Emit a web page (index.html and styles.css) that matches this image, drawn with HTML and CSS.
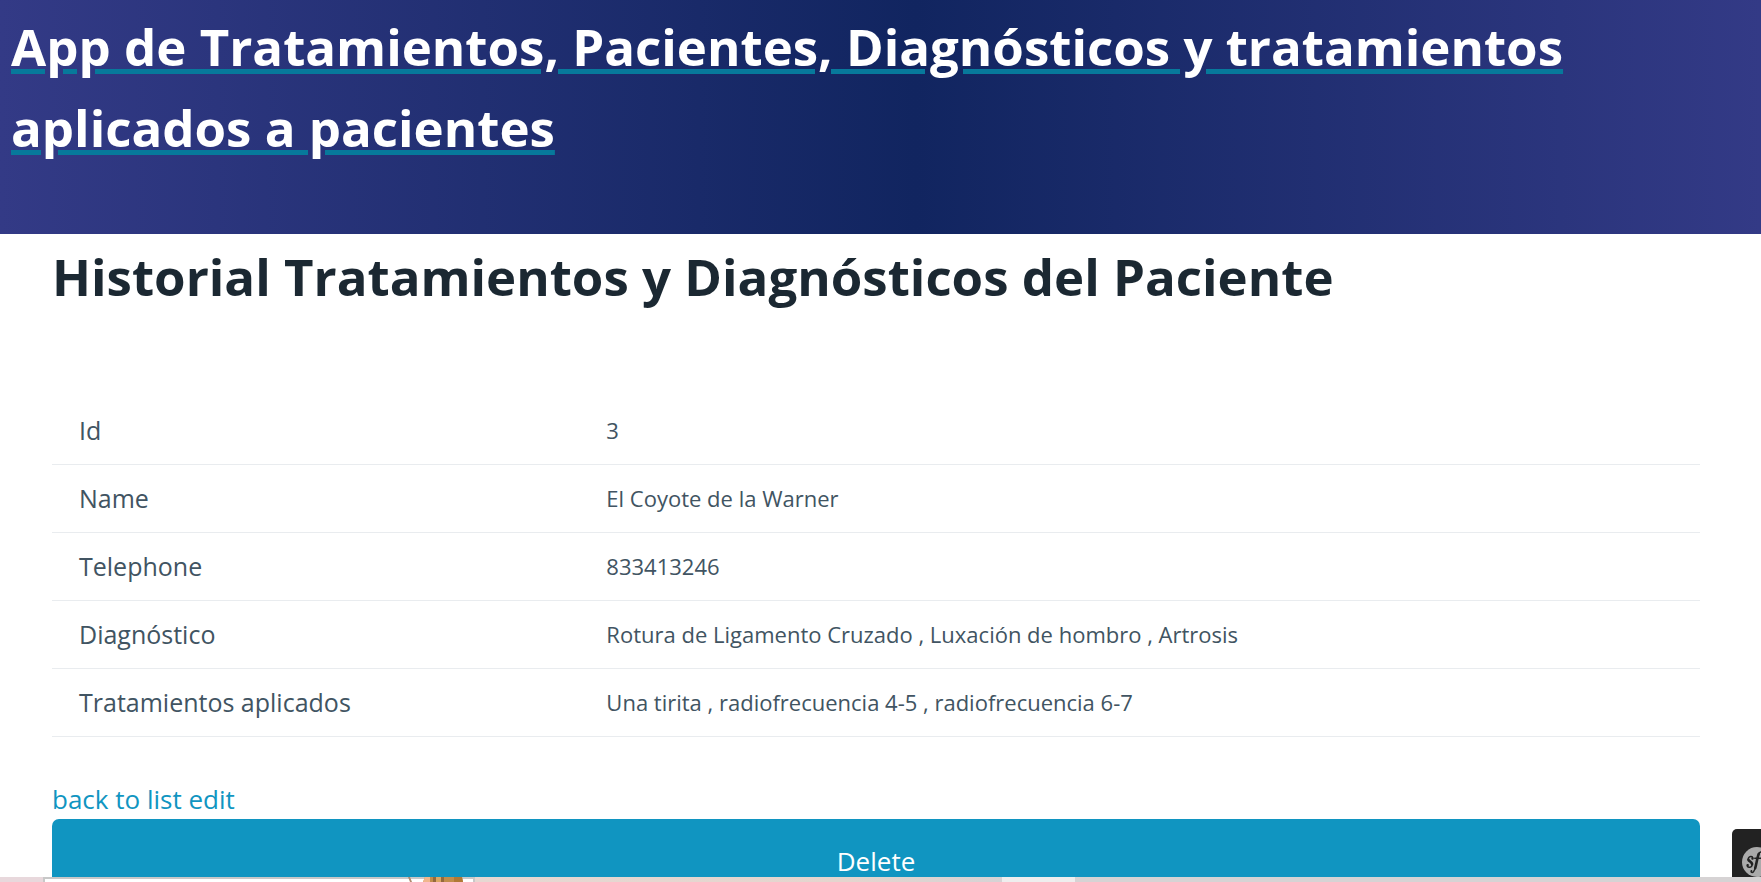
FILE: index.html
```html
<!DOCTYPE html>
<html lang="es">
<head>
<meta charset="utf-8">
<meta name="viewport" content="width=device-width, initial-scale=1">
<title>Historial del Paciente</title>
<link rel="stylesheet" href="styles.css">
</head>
<body>
<header class="site-header">
  <h1 class="site-title"><a class="site-link" href="#">App de Tratamientos, Pacientes, Diagnósticos y tratamientos aplicados a pacientes</a></h1>
</header>
<main class="content">
  <h1 class="page-title">Historial Tratamientos y Diagnósticos del Paciente</h1>
  <table class="record">
    <tbody>
      <tr><th scope="row">Id</th><td>3</td></tr>
      <tr><th scope="row">Name</th><td>El Coyote de la Warner</td></tr>
      <tr><th scope="row">Telephone</th><td>833413246</td></tr>
      <tr><th scope="row">Diagnóstico</th><td>Rotura de Ligamento Cruzado , Luxación de hombro , Artrosis</td></tr>
      <tr><th scope="row">Tratamientos aplicados</th><td>Una tirita , radiofrecuencia 4-5 , radiofrecuencia 6-7</td></tr>
    </tbody>
  </table>
  <nav class="actions"><a href="#">back to list</a> <a href="#">edit</a></nav>
  <form class="delete-form"><button class="delete" type="button">Delete</button></form>
</main>
<button class="toolbar-toggle" type="button" aria-label="Symfony toolbar">
  <svg class="sf-logo" viewBox="0 0 30 30" aria-hidden="true">
    <circle cx="15" cy="15" r="15" fill="#aaa"/>
    <g fill="none" stroke="#222" stroke-linecap="round">
      <path d="M10.600 11.400c.3-1.300-.6-2.100-1.900-1.900-1.800.3-2.800 1.800-2.300 3.200" stroke-width="1.500"/>
      <path d="M6.400 12.700c.7 1.700 3.300 2.300 3.700 4.300" stroke-width="2.600"/>
      <path d="M10.100 17c.3 2-1.100 3.400-2.900 3.300-1.600-.1-2.300-1.200-1.700-2.300" stroke-width="1.500"/>
      <circle cx="10.500" cy="11.500" r=".6" stroke-width="1.200"/>
      <circle cx="5.700" cy="18.100" r=".6" stroke-width="1.200"/>
      <path d="M20 6.300c-.2-2-2.200-1.800-3.200.5" stroke-width="1.500"/>
      <path d="M16.800 6.800c-1.500 3.400-2.200 9.800-3.600 14.300" stroke-width="2.600"/>
      <path d="M13.200 21.100c-.9 3-2.200 4.800-3.500 4.300-.8-.4-.7-1.300-.2-1.700M12.800 11.200h6" stroke-width="1.500"/>
    </g>
  </svg>
</button>
<div class="desktop-edge" aria-hidden="true">
  <div class="edge-pink"></div>
  <div class="edge-window">
    <svg class="edge-figure" viewBox="0 0 56 5" preserveAspectRatio="none">
      <path d="M0 0h2l2 5h-2z" fill="#b08c70"/>
      <path d="M17 0h37l1 5h-40z" fill="#c18d4c"/>
      <path d="M17 0h5v5h-7z" fill="#f0b68c"/>
      <path d="M25 0h3v5h-3zM33 0h3v5h-3z" fill="#94693c"/>
      <path d="M28 0h5v5h-5z" fill="#dba764"/>
      <path d="M46 0h8l1 5h-9z" fill="#b07936"/>
    </svg>
  </div>
  <div class="edge-beige"></div>
  <div class="edge-light"></div>
  <div class="edge-grey"></div>
</div>
</body>
</html>
```
FILE: styles.css
```css
* { box-sizing: border-box; }
body {
  margin: 0;
  height: 100vh;
  overflow: hidden;
  position: relative;
  background: #fff;
  color: #415462;
  font: 400 26px/40px "Open Sans", "Noto Sans", sans-serif;
}
h1 { margin: 0; font-size: 51px; line-height: 81px; font-weight: 700; }
.site-header {
  padding: 6px 11px 66px;
  background: linear-gradient(90deg, #333a86 0%, #112560 52%, #333a86 100%);
}
.site-link {
  color: #fff;
  text-decoration: underline 5px #07799b;
  text-underline-offset: 3px;
}
.content { padding: 2px 61px 0 52px; }
.page-title { color: #1b2832; margin-bottom: 80px; }
.record { width: 100%; border-collapse: collapse; }
.record th, .record td {
  padding: 14px 27px;
  border-bottom: 1px solid #e9ecef;
  text-align: left;
  font-weight: 400;
  line-height: 39px;
}
.record th { width: 32%; font-size: 25px; }
.record td { font-size: 22px; }
.actions { margin-top: 42px; }
.actions a { color: #1095c1; text-decoration: none; }
.delete {
  display: block;
  width: 100%;
  padding: 22px 27px;
  border: 0;
  border-radius: 7px;
  background: #1095c1;
  color: #fff;
  font: inherit;
}
.toolbar-toggle {
  position: absolute;
  right: 0;
  bottom: 0;
  width: 29px;
  height: 53px;
  padding: 18px 0 5px 10px;
  border: 0;
  border-radius: 5px 0 0 0;
  background: #222;
  overflow: hidden;
}
.sf-logo { display: block; width: 30px; height: 30px; }
.desktop-edge {
  position: absolute;
  left: 0;
  right: 0;
  bottom: 0;
  height: 5px;
  display: grid;
  grid-template-columns: 43fr 432fr 527fr 73fr 686fr;
}
.edge-pink { background: #e8d8dc; }
.edge-window {
  display: flex;
  justify-content: flex-end;
  padding-right: 9px;
  background: #fff;
  border: solid #c8c8c8;
  border-width: 2px 2px 0;
}
.edge-figure { width: 56px; height: 5px; margin-top: -2px; }
.edge-beige { background: linear-gradient(90deg, #e6d8d2, #e4d5ce 70%, #d6d3d5); }
.edge-light { background: #eee; }
.edge-grey { background: #d6d3d4; }
```
